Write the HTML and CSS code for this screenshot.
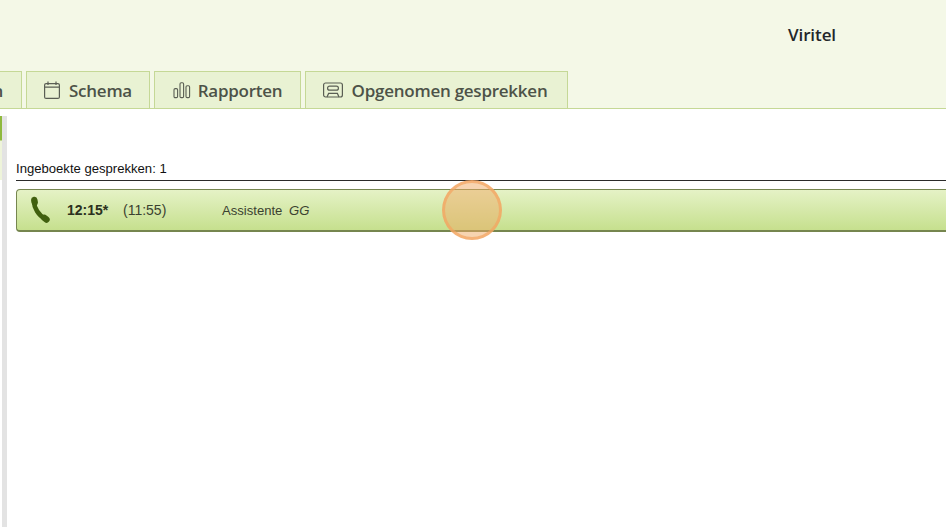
FILE: index.html
```html
<!DOCTYPE html>
<html lang="nl">

<head>
    <meta charset="UTF-8">
    <title>Viritel</title>
    <link rel="stylesheet" href="styles.css">
</head>

<body>
    <header class="header">
        <div class="brand">Viritel</div>
        <nav class="tabs">
            <a class="tab tab-first">n</a>
            <a class="tab tab-schema">
                <svg class="tab-icon" width="20" height="20" viewBox="0 0 20 20" fill="none" stroke="#5a5e54" stroke-width="1.2">
                    <rect x="2.6" y="3.6" width="14.8" height="14.8" rx="1.5"/>
                    <path d="M2.6 7.2h14.800M6 1.500v3.600M14 1.500v3.600"/>
                </svg>
                Schema
            </a>
            <a class="tab tab-rapporten">
                <svg class="tab-icon" width="18" height="20" viewBox="0 0 18 20" fill="none" stroke="#5a5e54" stroke-width="1.1">
                    <rect x="1" y="8.600" width="3.600" height="9" rx="1.200"/>
                    <rect x="7" y="2.800" width="3.600" height="14.800" rx="1.200"/>
                    <rect x="13" y="5.800" width="3.600" height="11.800" rx="1.200"/>
                </svg>
                Rapporten
            </a>
            <a class="tab tab-opgenomen">
                <svg class="tab-icon" width="22" height="20" viewBox="0 0 22 20" fill="none" stroke="#5a5e54" stroke-width="1.2">
                    <rect x="1.600" y="3" width="18.800" height="14" rx="2"/>
                    <rect x="5.600" y="6.200" width="10.800" height="4" rx="2"/>
                    <path d="M5 17l1.600-3.600h8.800L17 17"/>
                </svg>
                Opgenomen gesprekken
            </a>
        </nav>
    </header>

    <main class="content">
        <aside class="side">
            <div class="side-mark"></div>
        </aside>
        <section class="calls">
            <div class="calls-title">Ingeboekte gesprekken: 1</div>
            <div class="call-row">
                <svg class="call-icon" width="22" height="28" viewBox="0 0 22 28" fill="none" stroke="#41600f" stroke-linecap="round">
                    <path stroke-width="4.600" d="M5 5C5 12 9.500 19.500 16.500 23"/>
                    <path stroke-width="6.400" d="M5.300 4L5.700 6.400M15.500 22l2 1.600"/>
                </svg>
                <span class="call-time">12:15*</span>
                <span class="call-duration">(11:55)</span>
                <span class="call-who">Assistente <em>GG</em></span>
            </div>
        </section>
    </main>

    <div class="click-marker"></div>
</body>

</html>
```

FILE: styles.css
```css
html, body {
    height: 100%;
}

body {
    margin: 0;
    overflow: hidden;
    background-color: #fff;
    font-family: "Liberation Sans", Arial, sans-serif;
    color: #222;
}

.header {
    height: 108px;
    background-color: #f4f8e7;
    border-bottom: 1px solid #c5d896;
    position: relative;
}

.brand {
    position: absolute;
    top: 25px;
    left: 788px;
    font-family: "Open Sans", sans-serif;
    font-size: 17px;
    font-weight: 600;
    letter-spacing: -0.1px;
    line-height: 20px;
    color: #23262a;
}

.tabs {
    display: flex;
    gap: 4px;
    height: 37px;
    padding-top: 71px;
    margin-left: -56px;
}

.tab {
    display: flex;
    align-items: center;
    justify-content: center;
    gap: 7px;
    box-sizing: border-box;
    height: 37px;
    border: 1px solid #c5d896;
    border-bottom: none;
    background-color: #e9f2d3;
    font-family: "Open Sans", sans-serif;
    font-size: 17px;
    font-weight: 600;
    letter-spacing: -0.25px;
    color: #4d5248;
}

.tab-first {
    width: 78px;
    justify-content: flex-end;
    padding-right: 18px;
}

.tab-schema {
    width: 124px;
    padding-right: 2px;
}

.tab-rapporten {
    width: 147px;
}

.tab-opgenomen {
    width: 263px;
    gap: 8px;
    padding-right: 4px;
}

.content {
    display: flex;
    height: 418px;
}

.side {
    width: 7px;
    flex-shrink: 0;
    margin-top: 7px;
    background: linear-gradient(to right, #fff 2px, #e3e3e3 2px);
}

.side-mark {
    width: 2px;
    height: 64px;
    background: linear-gradient(to bottom, #8fb93e 0, #8fb93e 24px, #eef4da 25px, #eef4da 100%);
}

.calls {
    flex: 1;
    min-width: 0;
    padding: 51px 0 0 9px;
}

.calls-title {
    height: 21px;
    box-sizing: border-box;
    border-bottom: 1px solid #2b2b2b;
    font-size: 13.1px;
    line-height: 17px;
    color: #111;
}

.call-row {
    display: flex;
    align-items: center;
    height: 43px;
    box-sizing: border-box;
    margin-top: 8px;
    margin-right: -8px;
    border: 1px solid #76864f;
    border-bottom-width: 2px;
    border-radius: 4px;
    background: linear-gradient(to bottom, #e5f2c6, #c6e08e);
    font-size: 13.1px;
    color: #3b4230;
}

.call-icon {
    margin-left: 12px;
    flex-shrink: 0;
}

.call-time {
    margin-left: 16px;
    width: 56px;
    font-size: 14px;
    font-weight: bold;
    color: #2b3120;
}

.call-duration {
    width: 99px;
    font-size: 14px;
}

.call-who em {
    margin-left: 3px;
}

.click-marker {
    position: absolute;
    left: 442px;
    top: 180px;
    width: 54px;
    height: 54px;
    border: 3px solid rgba(244, 164, 96, 0.7);
    border-radius: 50%;
    background-color: rgba(240, 170, 100, 0.5);
}
```
